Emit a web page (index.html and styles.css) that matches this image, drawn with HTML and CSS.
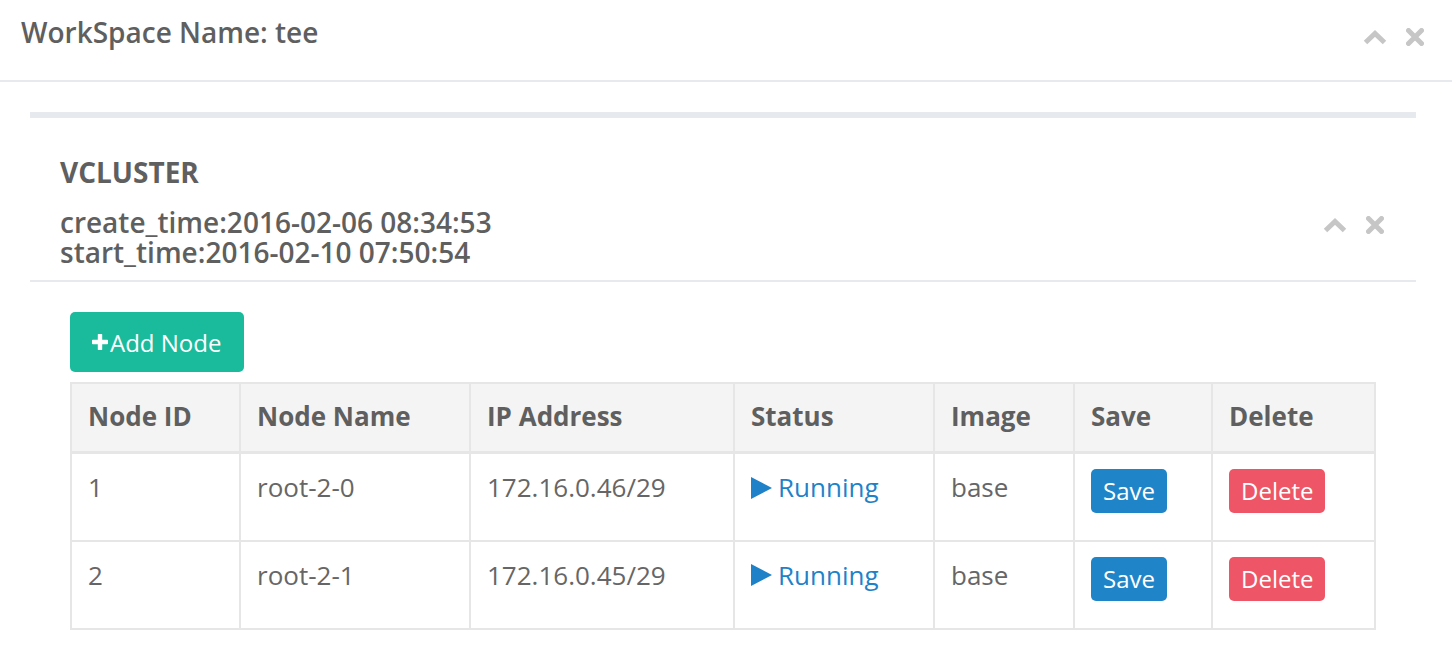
FILE: index.html
```html
<!DOCTYPE html>
<html lang="en">
<head>
<meta charset="utf-8">
<title>WorkSpace</title>
<link rel="stylesheet" href="styles.css">
</head>
<body>
<div class="page">
  <header class="top">
    <h2 class="title">WorkSpace Name: tee</h2>
    <div class="tools">
      <svg class="ic-up" width="24" height="15" viewBox="0 0 24 15"><polyline points="2.5,12.5 12,3.5 21.5,12.5" fill="none" stroke="#c6c6c6" stroke-width="5" stroke-linejoin="miter"/></svg>
      <svg class="ic-x" width="18" height="18" viewBox="0 0 18 18"><path d="M2.5 2.5 L15.5 15.5 M15.5 2.5 L2.5 15.5" stroke="#c6c6c6" stroke-width="5" stroke-linecap="round"/></svg>
    </div>
  </header>
  <main class="content">
    <div class="bar"></div>
    <div class="vc-head">
      <div class="vc-info">
        <h3 class="vc-name">VCLUSTER</h3>
        <p class="vc-times"><span class="line">create_time:2016-02-06 08:34:53</span><span class="line">start_time:2016-02-10 07:50:54</span></p>
      </div>
      <div class="tools tools-inner">
        <svg class="ic-up" width="24" height="15" viewBox="0 0 24 15"><polyline points="2.5,12.5 12,3.5 21.5,12.5" fill="none" stroke="#c6c6c6" stroke-width="5" stroke-linejoin="miter"/></svg>
        <svg class="ic-x" width="18" height="18" viewBox="0 0 18 18"><path d="M2.5 2.5 L15.5 15.5 M15.5 2.5 L2.5 15.5" stroke="#c6c6c6" stroke-width="5" stroke-linecap="round"/></svg>
      </div>
    </div>
    <div class="vc-body">
      <button class="btn btn-add"><svg class="ic-plus" width="16" height="16" viewBox="0 0 16 16"><path d="M8 1 V15 M1 8 H15" stroke="#fff" stroke-width="4.4" stroke-linecap="round"/></svg>Add Node</button>
      <table class="nodes">
        <colgroup>
          <col class="c-id"><col class="c-name"><col class="c-ip"><col class="c-status"><col class="c-image"><col class="c-save"><col class="c-del">
        </colgroup>
        <thead>
          <tr><th>Node ID</th><th>Node Name</th><th>IP Address</th><th>Status</th><th>Image</th><th>Save</th><th>Delete</th></tr>
        </thead>
        <tbody>
          <tr>
            <td>1</td><td>root-2-0</td><td>172.16.0.46/29</td>
            <td><span class="status"><svg class="ic-play" width="21" height="22" viewBox="0 0 21 22"><polygon points="0,0 21,11 0,22" fill="#1f82c8"/></svg>Running</span></td>
            <td>base</td>
            <td><button class="btn btn-save">Save</button></td>
            <td><button class="btn btn-del">Delete</button></td>
          </tr>
          <tr>
            <td>2</td><td>root-2-1</td><td>172.16.0.45/29</td>
            <td><span class="status"><svg class="ic-play" width="21" height="22" viewBox="0 0 21 22"><polygon points="0,0 21,11 0,22" fill="#1f82c8"/></svg>Running</span></td>
            <td>base</td>
            <td><button class="btn btn-save">Save</button></td>
            <td><button class="btn btn-del">Delete</button></td>
          </tr>
        </tbody>
      </table>
    </div>
  </main>
</div>
</body>
</html>
```
FILE: styles.css
```css
html, body {
  margin: 0;
  padding: 0;
  background: #fff;
}
body {
  font-family: "Open Sans", "DejaVu Sans", sans-serif;
  color: #666;
}
.top {
  display: flex;
  justify-content: space-between;
  align-items: flex-start;
  height: 82px;
  box-sizing: border-box;
  padding: 14px 28px 0 21px;
  border-bottom: 2px solid #e6e9ed;
}
.title {
  margin: 0;
  font-size: 28px;
  line-height: 36px;
  font-weight: 600;
  color: #5f5f5f;
}
.tools {
  display: flex;
  align-items: center;
  gap: 19px;
  height: 36px;
  margin-top: 5px;
}
.tools svg { display: block; }
.content {
  padding: 30px 36px 0 30px;
}
.bar {
  height: 6px;
  background: #e6e9ed;
}
.vc-head {
  display: flex;
  justify-content: space-between;
  align-items: flex-start;
  padding: 36px 32px 13px 30px;
  border-bottom: 2px solid #e6e9ed;
}
.vc-name {
  margin: 0 0 17px;
  font-size: 28px;
  line-height: 36px;
  font-weight: 700;
  color: #5f5f5f;
}
.vc-times {
  margin: 0;
  font-size: 28px;
  font-weight: 600;
  color: #5f5f5f;
}
.vc-times .line {
  display: block;
  height: 30px;
  line-height: 30px;
}
.tools-inner {
  margin-top: 53px;
}
.vc-body {
  padding: 30px 40px 0 40px;
}
.btn {
  border: none;
  font-family: "Open Sans", "DejaVu Sans", sans-serif;
  color: #fff;
  cursor: pointer;
  border-radius: 5px;
}
.btn-add {
  display: flex;
  align-items: center;
  height: 60px;
  padding: 0 23px 0 22px;
  font-size: 24px;
  background: #1abb9c;
}
.ic-plus { margin-right: 2px; }
.nodes {
  margin-top: 10px;
  width: 100%;
  table-layout: fixed;
  border-collapse: collapse;
  border: 2px solid #e6e6e6;
  font-size: 26px;
}
.c-id { width: 169px; }
.c-name { width: 230px; }
.c-ip { width: 264px; }
.c-status { width: 200px; }
.c-image { width: 140px; }
.c-save { width: 138px; }
.c-del { width: 163px; }
.nodes th {
  background: #f4f4f4;
  text-align: left;
  font-weight: 700;
  line-height: 35px;
  padding: 15px 16px 17px;
  color: #5f5f5f;
  border: 2px solid #e6e6e6;
  border-bottom-width: 3px;
}
.nodes td {
  vertical-align: top;
  line-height: 35px;
  height: 88px;
  box-sizing: border-box;
  padding: 16px 16px 0;
  border: 2px solid #e6e6e6;
  color: #666;
}
.status {
  display: inline-flex;
  align-items: center;
  gap: 6px;
  color: #1f82c8;
}
.btn-save, .btn-del {
  display: block;
  height: 44px;
  line-height: 44px;
  padding: 0 12px;
  font-size: 24px;
  margin-top: -1px;
}
.btn-save { background: #1f85c8; }
.btn-del { background: #ee5667; }
```
